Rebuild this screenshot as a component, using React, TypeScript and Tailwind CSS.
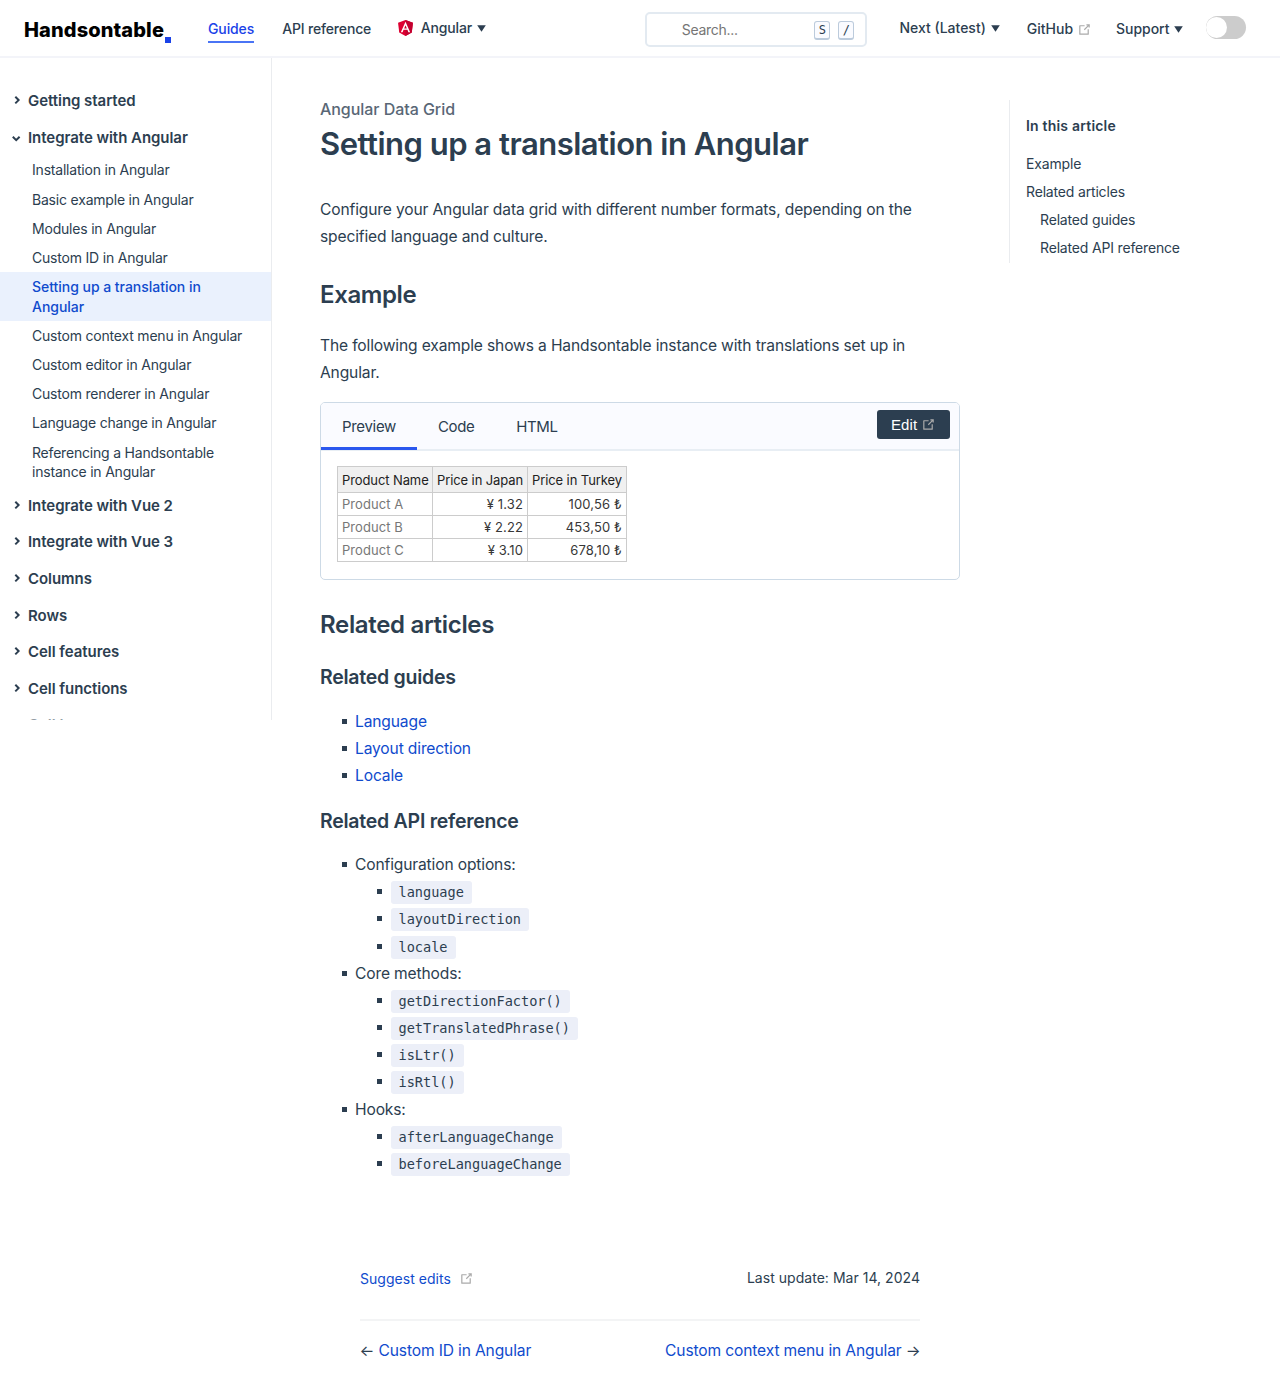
import React from 'react';

function OutboundIcon({ className = '' }: { className?: string }) {
  return (
    <svg viewBox="0 0 100 100" width="15" height="15" fill="currentColor" className={`shrink-0 text-[#aaa] ${className}`}>
      <path d="M18.8,85.1h56l0,0c2.2,0,4-1.8,4-4v-32h-8v28h-48v-48h28v-8h-32l0,0c-2.2,0-4,1.8-4,4v56C14.8,83.3,16.6,85.1,18.8,85.1z" />
      <polygon points="45.7,48.7 51.3,54.3 77.2,28.5 77.2,37.2 85.2,37.2 85.2,14.9 62.8,14.9 62.8,22.9 71.5,22.9" />
    </svg>
  );
}

function AngularIcon() {
  return (
    <svg viewBox="31 30 188 200" width="15" height="16" className="shrink-0">
      <polygon fill="#DD0031" points="125,30 31.9,63.2 46.1,186.3 125,230 203.9,186.3 218.1,63.2" />
      <polygon fill="#C3002F" points="125,30 125,230 203.9,186.3 218.1,63.2" />
      <path fill="#fff" d="M125,52.1L66.8,182.6h21.7l11.7-29.2h49.4l11.7,29.2H183L125,52.1z M142,135.4H108l17-40.9L142,135.4z" />
    </svg>
  );
}

function Caret() {
  return (
    <svg viewBox="0 0 9 7" width="9" height="7" className="shrink-0" fill="currentColor">
      <path d="M0.2 0.3h8.6L4.5 6.8z" />
    </svg>
  );
}

function Kbd({ children }: { children: React.ReactNode }) {
  return (
    <span className="flex h-[19px] w-4 items-center justify-center rounded-[3px] border border-b-2 border-[#bccbdc] bg-[#fafbff] font-['DejaVu_Sans_Mono',monospace] text-xs leading-none">
      {children}
    </span>
  );
}

function Header() {
  return (
    <header className="flex h-[58px] items-start border-b-2 border-[#f3f4f9] pl-6 text-sm leading-5 font-medium">
      <a className="flex w-[148px] items-end pt-[18px] text-black">
        <span className="text-[20px] leading-6 font-extrabold tracking-[0.11px]">Handsontable</span>
        <span className="mb-[-1px] ml-[1px] size-1.5 shrink-0 bg-[#1a42e8]" />
      </a>
      <a className="mt-[19px] ml-9 border-b-2 border-[#4a74f5] pb-[2px] tracking-[-0.12px] text-[#1a42e8]">Guides</a>
      <a className="mt-[19px] ml-7 tracking-[-0.16px]">API reference</a>
      <div className="mt-[18px] ml-[26.6px] flex items-center gap-[5px]">
        <AngularIcon />
        <span className="ml-[3px] tracking-[-0.15px]">Angular</span>
        <Caret />
      </div>
      <div className="mt-3 ml-[159.4px] flex h-[35px] w-[222px] items-center rounded-[5px] border-2 border-[#e3eaf1] pr-[11px] pl-[34.4px]">
        <span className="flex-1 font-normal tracking-[-0.28px] text-[#757575]">Search...</span>
        <div className="mt-px flex gap-2">
          <Kbd>S</Kbd>
          <Kbd>/</Kbd>
        </div>
      </div>
      <div className="mt-[18px] ml-8 flex items-center gap-[5px]">
        <span>Next (Latest)</span>
        <Caret />
      </div>
      <div className="mt-[19px] ml-[27px] flex items-center gap-[4px]">
        <span className="tracking-[0px]">GitHub</span>
        <OutboundIcon />
      </div>
      <div className="mt-[19px] ml-6 flex items-center gap-[5px]">
        <span className="tracking-[-0.05px]">Support</span>
        <Caret />
      </div>
      <div className="mt-4 ml-[22.4px] h-[23px] w-10 rounded-full bg-[#ccc]">
        <div className="mt-px size-[21px] rounded-full bg-white" />
      </div>
    </header>
  );
}

function Group({ label, open }: { label: string; open?: boolean }) {
  return (
    <div className="flex h-[36.7px] items-center pl-3">
      <svg viewBox="0 0 10 10" width="10" height="10" fill="none" stroke="currentColor" strokeWidth="2" className="mr-1.5 shrink-0">
        {open ? <path d="M0.8 3.8l3.4 3.4L7.6 3.8" /> : <path d="M3.3 0.8l3.3 3.3L3.3 7.4" />}
      </svg>
      <span className="text-[15px] leading-6 font-semibold tracking-[-0.05px]">{label}</span>
    </div>
  );
}

function Item({ label, active }: { label: string; active?: boolean }) {
  return (
    <a
      className={
        active
          ? 'block bg-[#eaf1fd] py-[4.8px] pr-8 pl-8 text-sm leading-[19.6px] font-medium tracking-[-0.03px] text-[#104bcd]'
          : 'block py-[4.8px] pr-5 pl-8 text-sm leading-[19.6px] tracking-[-0.2px]'
      }
    >
      {label}
    </a>
  );
}

function Sidebar() {
  return (
    <aside className="h-[662px] w-[272px] shrink-0 overflow-hidden border-r border-[#eaecef] pt-[24.6px]">
      <Group label="Getting started" />
      <Group label="Integrate with Angular" open />
      <div className="-mt-[0.4px] mb-[0.6px]">
        <Item label="Installation in Angular" />
        <Item label="Basic example in Angular" />
        <Item label="Modules in Angular" />
        <Item label="Custom ID in Angular" />
        <Item label="Setting up a translation in Angular" active />
        <Item label="Custom context menu in Angular" />
        <Item label="Custom editor in Angular" />
        <Item label="Custom renderer in Angular" />
        <Item label="Language change in Angular" />
        <Item label="Referencing a Handsontable instance in Angular" />
      </div>
      <Group label="Integrate with Vue 2" />
      <Group label="Integrate with Vue 3" />
      <Group label="Columns" />
      <Group label="Rows" />
      <Group label="Cell features" />
      <Group label="Cell functions" />
      <div className="-mt-px opacity-50">
        <Group label="Cell types" />
      </div>
    </aside>
  );
}

const products = [
  ['Product A', '¥ 1.32', '100,56 ₺'],
  ['Product B', '¥ 2.22', '453,50 ₺'],
  ['Product C', '¥ 3.10', '678,10 ₺'],
];

function Example() {
  return (
    <div className="mt-4 h-[177.5px] overflow-hidden rounded-[5px] border border-[#cddae6]">
      <div className="flex h-12 items-start border-b-2 border-[#e8eef4] bg-[#fafbff] text-[15px] leading-6">
        <span className="h-[47px] w-24 border-b-[3px] border-[#2a57ee] pt-3 pl-[21px] tracking-[-0.32px]">Preview</span>
        <span className="pt-3 pl-[21px] tracking-[-0.4px]">Code</span>
        <span className="pt-3 pl-[42px] tracking-[-0.4px]">HTML</span>
        <span className="mt-[7px] mr-[9px] ml-auto flex h-[29px] w-[73px] items-center gap-1 rounded-[3px] bg-[#2c3e50] pl-[14px] font-['Liberation_Sans',sans-serif] text-[15px] tracking-[0.1px] text-white">
          Edit
          <OutboundIcon />
        </span>
      </div>
      <table className="mt-[15px] ml-4 w-[290px] table-fixed border-collapse text-[13px] text-[#373737]">
        <colgroup>
          <col className="w-[95px]" />
          <col className="w-[95px]" />
          <col className="w-[99px]" />
        </colgroup>
        <thead>
          <tr className="h-[26px] bg-[#f0f0f0] tracking-[-0.1px] text-[#222]">
            {['Product Name', 'Price in Japan', 'Price in Turkey'].map((h) => (
              <th key={h} className="border border-[#ccc] px-0 pt-[2px] pb-0 pl-1 text-left leading-[21px] font-normal whitespace-nowrap">{h}</th>
            ))}
          </tr>
        </thead>
        <tbody>
          {products.map(([name, jp, tr]) => (
            <tr key={name} className="h-[23px]">
              <td className="border border-[#ccc] px-1 py-0 leading-[21px] tracking-[0.05px] text-[#777]">{name}</td>
              <td className="border border-[#ccc] px-1 py-0 text-right leading-[21px] tracking-[0.12px]">{jp}</td>
              <td className="border border-[#ccc] px-1 py-0 text-right leading-[21px] tracking-[0.15px]">{tr}</td>
            </tr>
          ))}
        </tbody>
      </table>
    </div>
  );
}

function ListRow({ children, link }: { children: React.ReactNode; link?: boolean }) {
  return (
    <li className="flex h-[27.2px] items-center pl-[21.5px]">
      <span className="mr-[8.5px] size-[5px] shrink-0 bg-[#2c3e50]" />
      <span className={link ? 'text-[#104bcd]' : ''}>{children}</span>
    </li>
  );
}

function CodeRow({ children }: { children: string }) {
  return (
    <li className="flex h-[27.2px] items-center pl-[57px]">
      <span className="mr-[8.5px] size-[5px] shrink-0 bg-[#2c3e50]" />
      <code className="mt-0.5 rounded-[3px] bg-[#eceff8] px-2 font-['DejaVu_Sans_Mono',monospace] text-[13.6px] leading-[23px] tracking-[-0.02px]">
        {children}
      </code>
    </li>
  );
}

function Article() {
  return (
    <main className="ml-12 w-[640px] text-[15.6px] leading-[27.2px] tracking-[-0.145px]">
      <p className="mt-[39px] text-base leading-6 font-medium tracking-[-0.05px] text-[#596776]">Angular Data Grid</p>
      <h1 className="mt-[3px] text-[31px] leading-10 font-semibold tracking-[-0.5px]">Setting up a translation in Angular</h1>
      <p className="mt-[31.6px]">
        Configure your Angular data grid with different number formats, depending on the
        <br />
        specified language and culture.
      </p>
      <h2 className="mt-[30px] text-2xl leading-[30px] font-semibold tracking-[-0.38px]">Example</h2>
      <p className="mt-[21.6px]">
        The following example shows a Handsontable instance with translations set up in
        <br />
        Angular.
      </p>
      <Example />
      <h2 className="mt-[30.5px] text-2xl leading-[30px] font-semibold tracking-[-0.32px]">Related articles</h2>
      <h3 className="mt-[24px] text-[19.5px] leading-[26px] font-semibold tracking-[-0.25px]">Related guides</h3>
      <ul className="mt-[17.6px]">
        <ListRow link>Language</ListRow>
        <ListRow link>Layout direction</ListRow>
        <ListRow link>Locale</ListRow>
      </ul>
      <h3 className="mt-[18.8px] text-[19.5px] leading-[26px] font-semibold tracking-[-0.25px]">Related API reference</h3>
      <ul className="mt-[16.9px]">
        <ListRow>Configuration options:</ListRow>
        <CodeRow>language</CodeRow>
        <CodeRow>layoutDirection</CodeRow>
        <CodeRow>locale</CodeRow>
        <ListRow>Core methods:</ListRow>
        <CodeRow>getDirectionFactor()</CodeRow>
        <CodeRow>getTranslatedPhrase()</CodeRow>
        <CodeRow>isLtr()</CodeRow>
        <CodeRow>isRtl()</CodeRow>
        <ListRow>Hooks:</ListRow>
        <CodeRow>afterLanguageChange</CodeRow>
        <CodeRow>beforeLanguageChange</CodeRow>
      </ul>
      <footer className="mx-10">
        <div className="mt-[90.7px] flex justify-between text-sm leading-5 tracking-[0.035px]">
          <a className="mt-px flex items-center gap-2 text-[#104bcd]">
            Suggest edits
            <OutboundIcon />
          </a>
          <span>Last update: Mar 14, 2024</span>
        </div>
        <div className="mt-[30px] flex justify-between border-t-2 border-[#f3f4f5] pt-[16px]">
          <span className="-ml-[0.5px]">
            ← <a className="text-[#104bcd]">Custom ID in Angular</a>
          </span>
          <span className="-mr-[0.5px]">
            <a className="text-[#104bcd]">Custom context menu in Angular</a> →
          </span>
        </div>
      </footer>
    </main>
  );
}

function Toc() {
  return (
    <nav className="mt-[42px] ml-[49px] h-[163px] border-l border-[#eaecef] pt-4 pl-4 text-sm leading-7 tracking-[-0.17px]">
      <p className="mb-[14px] leading-5 font-semibold tracking-[0.2px]">In this article</p>
      <p>Example</p>
      <p>Related articles</p>
      <p className="pl-[14px]">Related guides</p>
      <p className="pl-[14px]">Related API reference</p>
    </nav>
  );
}

export default function App() {
  return (
    <div className="h-[1385px] w-[1280px] overflow-hidden bg-white font-[Inter,sans-serif] text-[#2c3e50]">
      <Header />
      <div className="flex items-start">
        <Sidebar />
        <Article />
        <Toc />
      </div>
    </div>
  );
}
